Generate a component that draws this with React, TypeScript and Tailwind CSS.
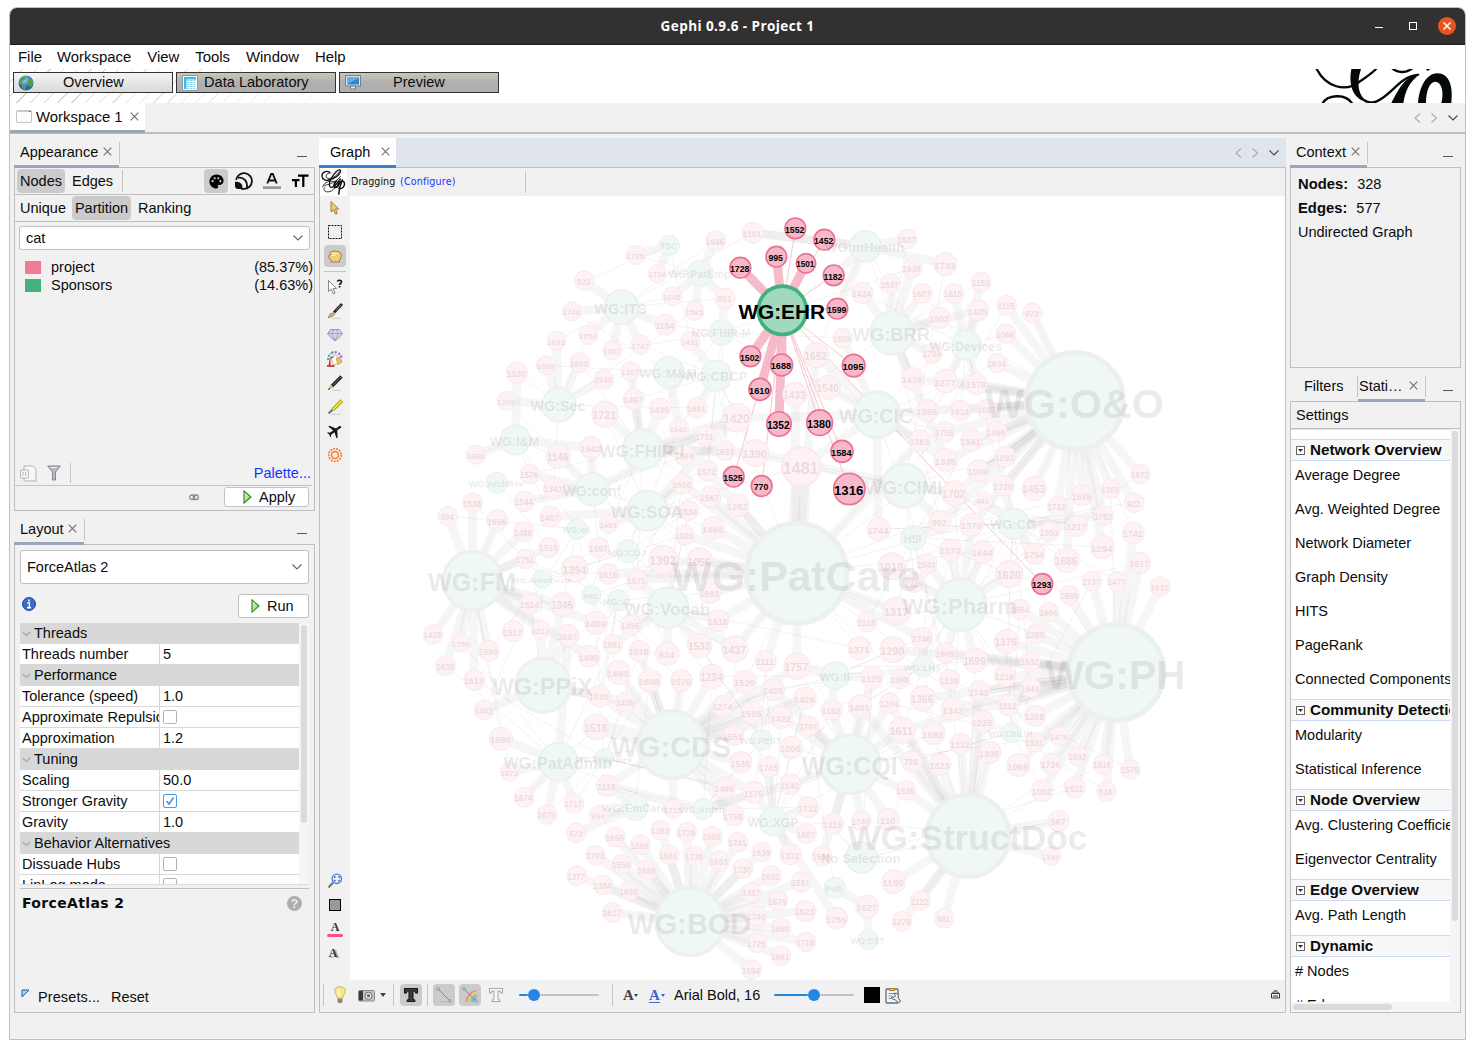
import React from "react";
import { MdFlight, MdPalette } from "react-icons/md";

/* ---------- graph data ---------- */

// Layout is stored in four quadrants; each entry is "label,x,y,radius".
const QUADRANTS: [number, number, string][] = [
  [0, 0, `TSC,748,106,32|1735,647,135,30|1734,713,191,29|1646,887,92,31|1181,998,68,33|WG:PatEmp,840,190,40|1645,757,259,30|1565,824,303,30|891,915,265,32|MG:FHIR-M,905,367,40|823,493,212,31|WG:ITS,604,292,54|1748,456,304,30|1753,505,375,30|1007,577,421,30|1747,662,404,30|1184,736,344,33|1431,811,393,30|1093,410,392,30|1689,378,466,30|1600,479,458,31|1549,552,508,31|1207,632,484,30|WG:M&M,746,487,48|WG:CBCP,889,497,48|1530,291,488,33|1209,260,572,30|WG:Sec,416,585,53|1721,555,613,41|1497,641,567,33|1436,720,596,33|1691,831,594,32|1642,777,654,30|1731,855,677,31|1420,951,623,45|1433,1125,553,38|1390,1006,729,42|1481,1144,770,61|WG:I&M,286,690,47|1668,168,734,30|1146,415,738,38|1542,513,713,35|WG:FHIR-I,668,718,63|1504,794,736,32|1653,916,722,31|1572,862,782,32|1650,788,822,32|WG:ArchRev,231,818,33|1576,329,792,31|1341,401,834,32|WG:conf,518,838,52|1544,313,874,32|1407,391,920,33|WG:SOA,683,902,63|1534,806,902,31|1567,871,861,33|1262,954,886,35|1494,879,955,36|1105,794,975,31|1491,566,942,30|WG:ed,471,957,32|1538,158,878,31|994,84,918,31|1656,232,931,33|1488,311,965,31|1515,387,1012,32|1751,317,1047,31|1597,537,1013,32|MG:CDJ,623,1024,36|1394,465,1077,41|1518,566,1092,32|1392,730,1049,45|1056,839,1052,40|1571,651,1109,32|WG:Anesthesia,367,1106,30|WG:FM,158,1112,93|WG:PatCare,1130,1090,158|IMC,514,1154,30|MG:V2,594,1171,33|1693,870,1148,34|1552,1126,55,33|995,1069,140,33|1728,961,173,33|1501,1158,160,31|WG:EHR,1087,301,77|1502,991,439,33|1688,1085,465,35|1610,1020,538,35|1352,1077,642,39|1525,941,800,33|770,1025,828,33`],
  [1140, 0, `1452,73,89,33|1182,101,196,33|1599,112,296,33|1095,161,467,36|1380,59,638,41|1584,126,724,35|1316,148,837,50|1293,727,1122,33|WG:mHealth,196,109,49|1507,322,87,31|1733,436,162,36|1636,337,174,31|1537,271,221,31|1424,187,249,33|1687,367,250,31|1615,461,250,31|1153,544,216,31|1425,534,301,33|1115,620,286,31|973,697,309,31|1503,419,324,33|WG:BRR,276,369,68|WG:Devices,499,406,46|1068,617,371,31|1509,128,384,31|1652,49,435,39|1704,397,430,31|1634,592,459,31|1426,338,507,35|1277,437,513,37|1578,530,522,33|1540,85,532,38|WG:O&O,825,573,153|WG:CIC,230,614,73|1585,382,602,35|1614,481,602,32|1087,562,598,31|1756,434,665,32|1496,589,665,32|1363,360,692,34|1541,514,691,34|1335,438,750,36|1292,616,741,33|1009,535,782,34|WG:CIMI,313,827,69|1702,463,850,39|1720,611,827,33|1453,703,835,38|460,550,872,29|1539,846,856,33|1700,932,836,31|1672,1022,792,31|922,1003,878,31|1712,772,889,31|1752,911,917,31|1217,831,948,33|1050,749,965,31|902,420,934,34|1370,515,944,36|WG:CG,641,941,48|1744,236,958,36|HSI,340,984,39|1742,1000,969,34|1294,907,1011,37|1573,452,1020,35|1644,548,1026,35|1754,704,1031,33|1686,800,1050,39|1010,275,1069,42|1543,381,1061,31|1239,344,1118,31|1620,628,1093,42|1737,876,1113,31|1477,952,1114,31|1617,1020,1058,33|1631,1081,1130,31|1655,809,1155,31|WG:Pharm,481,1185,82`],
  [0, 1140, `1428,39,133,31|1750,124,158,30|1550,207,182,32|1635,77,227,31|1613,163,270,33|1514,330,42,33|1345,428,44,38|1517,279,124,33|1212,363,120,30|1697,444,136,34|1489,528,98,36|1495,632,104,32|WG:Vocab,744,53,64|1618,895,92,34|1651,579,163,31|1490,508,199,34|1018,658,183,33|924,742,191,37|1533,839,167,38|1437,945,177,41|1111,1037,213,33|1757,1131,229,41|WG:PPiX,369,286,86|1402,193,360,31|1690,243,446,36|1493,595,247,37|1608,689,272,36|1570,784,272,34|1234,876,260,38|1520,975,275,36|1405,1061,299,34|1030,538,318,34|1435,617,335,31|1274,909,348,34|1505,996,368,36|1422,1084,382,35|1429,1155,325,35|1516,529,411,40|WG:CDS,755,464,107|1553,940,436,33|WG:PEST,1024,450,33|1005,1113,473,35|WG:PatAdmin,416,515,60|WG:Templates,553,505,30|1673,270,545,30|1674,312,622,31|1675,381,673,31|1717,462,640,31|1118,561,587,34|1535,963,517,34|1745,1047,530,33|1499,914,593,33|1175,1002,607,34|1142,1111,583,33|694,537,675,30|WG:EmCare,645,652,41|1715,760,656,30|WG:Arden,849,657,33|1758,941,676,33|WG:XGP,1061,694,45|573,469,729,31|1695,586,741,31|1589,661,764,31|1383,722,720,31|1729,800,726,31|1555,877,739,31|1741,954,757,31|1703,527,796,31|1556,605,823,31|1588,682,839,31|1681,747,794,31|1738,824,799,31|1683,898,812,31|1730,968,836,31|1639,1025,786,31|1372,1112,793,33|1682,1054,857,31|1377,470,857,31|1384,549,885,31|1626,628,902,31|1627,577,967,31|WG:BOD,810,995,107|1387,995,907,31|1679,1074,932,31|1740,1011,979,31|1680,1083,1014,31|1725,1011,1058,31|1661,1083,1097,31|1554,995,1139,31|1591,1144,876,32|1523,1156,963,33|1718,1158,1056,31|1732,1165,652,33|1607,1160,731,31|1707,1167,407,31`],
  [1140, 1140, `1128,201,96,31|1317,290,63,43|1654,660,58,32|1694,747,66,31|1260,707,133,31|1376,619,155,38|1746,366,144,33|1371,178,175,36|1290,279,179,41|1609,437,188,32|1699,525,211,38|1632,691,214,31|WG:PH,948,247,151|WG:II,106,257,43|WG:LHS,370,229,34|1125,216,262,35|1598,300,267,31|1139,449,269,32|1216,615,258,33|1743,538,304,33|1643,692,293,31|1366,368,325,39|1204,269,339,32|1401,180,349,36|1162,95,359,33|1342,460,357,36|1112,625,345,33|1208,705,377,33|1225,548,395,35|1611,306,421,41|1692,400,429,36|WG:ChiLIH,633,428,31|1521,705,456,31|1475,777,438,29|1232,482,461,33|1398,569,487,35|1069,655,525,36|1736,753,521,33|1532,834,499,31|1616,908,523,31|1575,991,538,31|728,335,513,33|1323,420,524,34|WG:CQI,151,523,93|1002,727,602,34|1511,824,592,33|816,919,604,31|1526,318,601,31|WG:StructDoc,504,737,130|567,776,693,33|1192,753,798,30|1315,99,702,33|1749,184,692,31|210,265,688,34|1536,66,798,31|No Selection,184,802,49|Pub,104,893,33|1180,281,875,37|1527,202,950,36|1122,361,932,31|1279,306,994,31|981,432,985,31|1755,110,985,34|WG:EST,205,1049,31`],
];

const LINKS: Record<string, string> = {
  TSC: "1735 1734",
  "WG:PatEmp": "1646 1645 1565 891",
  "MG:FHIR-M": "891",
  "WG:mHealth": "1181 1507 1733 1599 1182 1181",
  "WG:ITS": "823 1748 1753 1007 1747 1184",
  "WG:CBCP": "1431 1691",
  "WG:Sec": "1093 1689 1600 1549 1209",
  "WG:I&M": "1530 1668 1542",
  "WG:M&M": "1642",
  "WG:FHIR-I": "1721 1497 1207 1436 1420 1653 1731 1390",
  "WG:conf": "1146 1576 1341 1544 1542 1420",
  "WG:SOA": "1407 1650 1534 1420 1491",
  "WG:FM": "994 1538 1656 1488 1515 1751 1428 1750 1550 1635 1613 1514 1345 1489 1212 1490",
  "WG:PatCare": "1262 1494 1567 1650 1572 1105 1056 1392 1571 1518 1618 1757 1437 1317 1111 1746 1652 1433 1693 1363",
  "WG:BRR": "1424 1537 1636 1687 1503 1425 1704 1426 1335",
  "WG:Devices": "1153 1425 1615 1277 1578",
  "WG:O&O": "1068 1115 973 1634 1578 1426 1585 1614 1087 1496 1756 1541 1335 1292 1009 1720 1453 1712 1539 1752 1700 922 1672 1686 1294 1702 902 1277 1370",
  "WG:CIC": "1509 1540 1585 1363 1420 1744 1652 1481 1335",
  "WG:CIMI": "1390 902 1702",
  "WG:CG": "460 1217 1752 1754 1720",
  HSI: "902",
  "WG:Pharm": "1620 1573 1239 1370 1609 1699 1644 1543",
  "WG:PPiX": "1212 1697 1345 1402 1030 1435",
  "WG:PatAdmin": "1690 1673 1674 1675 1717 1697",
  "WG:CDS": "1435 1030 1493 1608 1018 1570 1234 1520 1405 1274 1505 1422 1429 1553 1535 1499 1175 1758 1715 1757 1118",
  "WG:EmCare": "573 694 1118",
  "WG:Arden": "1118 1175 1142",
  "WG:XGP": "1745 1175 1732 1607 1372 1755",
  "WG:BOD": "1695 1589 1383 1729 1555 1741 1703 1556 1588 1681 1738 1683 1730 1639 1682 1377 1384 1626 1627 1387 1679 1740 1680 1725 1661 1554 1591 1523 1718",
  "WG:CQI": "1401 1162 1125 1204 1611 1315 1749 210 1142 1707 1526 1536 1422 1405",
  "WG:StructDoc": "1526 1323 728 1232 1225 1398 1611 1180 1122 1279 981 567 1192 1204 1743 1401",
  "WG:PH": "1655 1694 1260 1654 1632 1216 1743 1643 1366 1342 1112 1208 1521 1069 1475 1736 1002 1532 1511 1616 816 1575 1631 1617 1477 1737 1742 1376 1699 1611 1609 1290",
  Pub: "1527",
  "WG:EST": "1527",
  "WG:II": "1757 1162 1125",
  "WG:LHS": "1746",
  "WG:Vocab": "1495 1651 1618 1437 1533 1571 924",
};

const STRONG = ["1728", "995", "1501", "1502", "1610", "1688", "1352"];
const WEAK = ["1552", "1452", "1182", "1599", "1095", "1380", "1584", "1316", "1525", "770", "1293"];
const ACTIVE = new Set(["WG:EHR", ...STRONG, ...WEAK]);

type GNode = { id: string; x: number; y: number; r: number; hub: boolean };

const NODES: GNode[] = QUADRANTS.flatMap(([ox, oy, s]) =>
  s.split("|").map((e) => {
    const [id, x, y, r] = e.split(",");
    return { id, x: ox + +x, y: oy + +y, r: +r, hub: !/^\d+$/.test(id) };
  }),
);
const BY_ID = new Map(NODES.map((n) => [n.id, n]));
const HUBS = NODES.filter((n) => n.hub && n.id !== "WG:EHR");

// Weak ties between projects and the surrounding work groups.
const WEB = NODES.filter((n) => !n.hub && !ACTIVE.has(n.id) && n.y < 1850).flatMap((n) => {
  const near = HUBS.map((h) => ({ h, d: Math.hypot(h.x - n.x, h.y - n.y) }))
    .filter((e) => e.d < 720 && e.d > 120)
    .sort((a, b) => a.d - b.d);
  const seed = +n.id;
  const inner = Math.hypot(n.x - 1130, n.y - 1130) < 650;
  return (inner ? [seed % 5, (seed % 7) + 3] : [seed % 6])
    .filter((i) => near[i])
    .map((i) => [n, near[i].h] as const);
});

function Line({ a, b, w, c }: { a: GNode; b: GNode; w: number; c: string }) {
  return <line x1={a.x} y1={a.y} x2={b.x} y2={b.y} strokeWidth={w} stroke={c} />;
}

const EDGE = "rgba(100,85,70,0.05)";

function Graph() {
  const ehr = BY_ID.get("WG:EHR")!;
  const faded = NODES.filter((n) => !ACTIVE.has(n.id));
  const active = NODES.filter((n) => ACTIVE.has(n.id));
  const label = (n: GNode, fill: string) => (
    <text key={n.id} x={n.x - 2} y={n.y + n.r * 0.32 + 2} fontSize={n.hub ? n.r * 0.81 : n.r * 0.79} textAnchor="middle" fill={fill}>
      {n.id}
    </text>
  );
  return (
    <svg viewBox="-210 -42 2805 2352" className="block h-full w-full font-['Liberation_Sans',Arial,sans-serif] font-bold">
      {Object.entries(LINKS).flatMap(([h, s]) =>
        s.split(" ").map((id, i) => <Line key={h + id + i} a={BY_ID.get(h)!} b={BY_ID.get(id)!} w={26} c={EDGE} />),
      )}
      <Line a={BY_ID.get("1481")!} b={BY_ID.get("WG:PatCare")!} w={60} c={EDGE} />
      <Line a={BY_ID.get("1516")!} b={BY_ID.get("WG:CDS")!} w={46} c={EDGE} />
      {WEB.map(([a, b], i) => (
        <Line key={i} a={a} b={b} w={2} c="rgba(100,85,70,0.11)" />
      ))}
      {STRONG.map((id) => (
        <Line key={id} a={ehr} b={BY_ID.get(id)!} w={27} c="#f6bccb" />
      ))}
      {WEAK.map((id) => (
        <Line key={id} a={ehr} b={BY_ID.get(id)!} w={2.2} c="#f6b0c1" />
      ))}
      {faded.map((n) => (
        <circle
          key={n.id}
          cx={n.x}
          cy={n.y}
          r={n.r * 0.95}
          fill={n.hub ? "#eff8f5" : "#fef2f4"}
          stroke={n.hub ? "#ecf1ef" : "#f9eaed"}
          strokeWidth={n.r * 0.1}
        />
      ))}
      {active.map((n) => (
        <circle
          key={n.id}
          cx={n.x}
          cy={n.y}
          r={n.r * 0.94}
          fill={n.hub ? "#a0d9be" : "#f6b9c9"}
          stroke={n.hub ? "#41b27d" : "#ed7290"}
          strokeWidth={n.hub ? 11 : 5}
        />
      ))}
      {faded.map((n) => label(n, n.hub ? "rgba(50,50,50,0.115)" : "rgba(100,60,70,0.14)"))}
      {active.map((n) => label(n, "#000"))}
    </svg>
  );
}

/* ---------- small pieces ---------- */

function Cross({ c = "#6e6e6e" }: { c?: string }) {
  return (
    <svg width="9" height="9" viewBox="0 0 9 9" className="shrink-0">
      <path d="M.7.7 8.3 8.3M8.3.7.7 8.3" stroke={c} strokeWidth="1.1" />
    </svg>
  );
}
function Chevron({ dir, c = "#666" }: { dir: "l" | "r" | "d"; c?: string }) {
  const d = dir === "l" ? "M7 0.5 2 5 7 9.5" : dir === "r" ? "M2.5.5 7.5 5 2.5 9.5" : "M.5 2.5 5 7 9.5 2.5";
  return (
    <svg width="10" height="10" viewBox="0 0 10 10" className="shrink-0" fill="none">
      <path d={d} stroke={c} strokeWidth="1.1" />
    </svg>
  );
}
const VSep = ({ className = "" }: { className?: string }) => <div className={`w-px shrink-0 bg-[#c4c4c4] ${className}`} />;

function TabArrows() {
  return (
    <div className="mt-[10px] mr-[7px] ml-auto flex">
      <Chevron dir="l" c="#aaa" />
      <div className="w-[6px]" />
      <Chevron dir="r" c="#aaa" />
      <div className="w-[9px]" />
      <Chevron dir="d" c="#444" />
    </div>
  );
}

function ViewHeader({ title, width }: { title: string; width: string }) {
  return (
    <div className="flex h-[29px] shrink-0 items-start">
      <div className={`z-10 flex h-[30px] items-center justify-between border-b-3 border-[#9aa7b8] pr-[7px] pl-[6px] ${width}`}>
        <span>{title}</span>
        <Cross />
      </div>
      <VSep className="mt-1 h-[21px]" />
      <Minimize />
    </div>
  );
}
const Minimize = () => <div className="mt-[18px] mr-[8px] ml-auto h-px w-[10px] bg-[#555]" />;

function Play() {
  return (
    <svg width="9" height="14" viewBox="0 0 9 14">
      <defs>
        <linearGradient id="play" x2="1" y2="1">
          <stop stopColor="#e4f7d4" />
          <stop offset="1" stopColor="#8dcc5e" />
        </linearGradient>
      </defs>
      <path d="M1 .9 8 7 1 13.1z" fill="url(#play)" stroke="#2b8414" strokeWidth="1.1" />
    </svg>
  );
}

function GephiMark() {
  return (
    <svg width="27" height="28" viewBox="0 0 81 84" fill="none" stroke="#111">
      <path d="M30 13C16 6 5 14 6 25c1 9 10 14 20 11 17-4 31-14 35-25 2-7-5-7-11-1-14 13-25 34-21 45 4 9 19-2 33-24" strokeWidth="4" />
      <path d="M34 15c-11-2-20 8-14 14 10 7 30-4 38-18M8 58c2-12 16-20 30-18 9 1 12 8 8 16-5 11-18 18-28 15-7-2-8-10-2-14" strokeWidth="2.6" />
      <path d="M12 52c14-1 38-10 50-28" strokeWidth="2.4" />
      <path d="M52 38c-8 3-13 15-8 20 6 3 14-8 18-20" strokeWidth="5" />
      <path d="M52 58c1-10 6-18 14-19 8 0 9 9 6 15-3 7-12 10-17 6M68 34C61 48 57 64 56 80" strokeWidth="4.500" />
    </svg>
  );
}

function GephiBanner() {
  return (
    <svg width="147" height="34" viewBox="390 207 441 102" className="mr-[8px]">
      <g fill="none" stroke="#050808" strokeWidth="7">
        <path d="M408 203c30 62 90 72 128 44 20-14 42-28 54-42M427 313c12-30 70-34 90-2M552 300c10 8 26 10 38 4 50-22 66-74 126-80" />
        <path d="M635 203c16 17 42 17 62 2" />
      </g>
      <path d="M514 207h29c-15 45-8 84 22 99-38-3-62-40-51-99zM720 222c-45 6-62 42-86 87h36c6-34 16-62 50-87zM714 309c6-64 34-88 56-89 38-1 50 38 44 89h-30c10-37-2-64-18-64-18 0-28 30-28 64zM738 207h14l-10 6z" fill="#050808" />
    </svg>
  );
}

/* ---------- top area ---------- */

function TitleBar() {
  return (
    <div className="flex h-[37px] shrink-0 items-center border-b border-[#1f1e1e] bg-[#323031] text-white">
      <div className="w-[100px]" />
      <div className="flex-1 text-center font-['Open_Sans','Noto_Sans',sans-serif] text-[13.5px] font-bold tracking-[0.42px]">
        Gephi 0.9.6 - Project 1
      </div>
      <div className="flex w-[100px] items-center pl-[10px]">
        <div className="mt-[3px] h-px w-2 bg-white" />
        <div className="ml-[26px] size-2 border border-white" />
        <div className="ml-[21px] flex size-[18px] items-center justify-center rounded-full bg-[#e95420]">
          <svg width="8" height="8" viewBox="0 0 8 8">
            <path d="M.5.5l7 7M7.5.5l-7 7" stroke="#fff" strokeWidth="1.5" />
          </svg>
        </div>
      </div>
    </div>
  );
}

function Perspective({ name, icon, on, pad }: { name: string; icon: React.ReactNode; on?: boolean; pad: string }) {
  return (
    <div
      className={`flex h-[21px] w-[160px] items-center border border-[#333] text-[14.6px] ${pad} ${
        on ? "bg-linear-to-b from-[#f4f4f4] to-[#d9d9d9]" : "bg-linear-to-b from-[#c6c8b8] via-[#b0b0b0] to-[#aeaeae]"
      }`}
    >
      {icon}
      <span className="-mt-px">{name}</span>
    </div>
  );
}

const Globe = (
  <svg width="16" height="16" viewBox="0 0 16 16">
    <defs>
      <radialGradient id="globe" cx=".4" cy=".3">
        <stop stopColor="#9fd4f5" />
        <stop offset="1" stopColor="#2766ac" />
      </radialGradient>
    </defs>
    <circle cx="8" cy="8" r="7.5" fill="url(#globe)" />
    <path d="M2 4c2-3 5-3 6-2l-1 3-3 1-1 3-2-1zM10 5l4-1c2 3 1 6-1 8l-3-2zM4 10l4 1-1 4-3-2z" fill="#4fa048" />
  </svg>
);
const Sheet = (
  <svg width="16" height="16" viewBox="0 0 16 16">
    <rect x=".5" y=".5" width="15" height="15" fill="#fff" stroke="#8c9aa4" />
    <path d="M2 2h12v2.500H2zM2 2h2.500v12H2z" fill="#3fb9e8" />
    <path d="M5 5.500h9M5 7.500h9M5 9.500h9M5 11.500h9M5 13.500h9" stroke="#7fd6f4" strokeDasharray="2.200 1" />
  </svg>
);
const Monitor = (
  <svg width="16" height="15" viewBox="0 0 16 15">
    <rect x=".5" y=".5" width="15" height="10.500" fill="#dde3ea" stroke="#75808b" />
    <path d="M2 2h12v7.500H2z" fill="#3285cf" />
    <path d="M2 9 14 3v-1H2z" fill="#68aee6" />
    <path d="M5.500 11h5v3h-5z" fill="#e5e5e5" stroke="#777" />
  </svg>
);

function TopBars() {
  return (
    <>
      <div className="flex h-[24px] shrink-0 items-center bg-white text-[14.9px]">
        {[
          ["File", "ml-[8px]"],
          ["Workspace", "ml-[15px]"],
          ["View", "ml-[16px]"],
          ["Tools", "ml-[16px]"],
          ["Window", "ml-[16px]"],
          ["Help", "ml-[16px]"],
        ].map(([t, m]) => (
          <span key={t} className={m}>{t}</span>
        ))}
      </div>
      <div className="flex h-[34px] shrink-0 bg-white">
        <div className="flex flex-1 gap-[3px] bg-[linear-gradient(90deg,transparent,white_330px),repeating-linear-gradient(135deg,#fff_0_8.7px,#cdcdcd_8.7px_9.7px)] pt-[3px] pl-[3px]">
          <Perspective name="Overview" icon={Globe} on pad="gap-[29px] pl-[4px]" />
          <Perspective name="Data Laboratory" icon={Sheet} pad="gap-[6px] pl-[5px]" />
          <Perspective name="Preview" icon={Monitor} pad="gap-[32px] pl-[5px]" />
        </div>
        <GephiBanner />
      </div>
      <div className="flex h-[31px] shrink-0 items-start border-b-2 border-[#bfbfbf]">
        <div className="flex h-[30px] w-[135px] items-center border-b-3 border-[#9aa7b8] bg-white pr-[6px] pl-[6px]">
          <svg width="16" height="14" viewBox="0 0 16 14" className="mr-[4px]">
            <rect x=".5" y=".5" width="15" height="12" rx="1" fill="#fbfbfb" stroke="#c3c3c3" />
            <path d="M1 1.500h14" stroke="#ccc" />
            <path d="M13 1.500h2" stroke="#e04a3c" />
          </svg>
          <span className="flex-1 text-[14.9px]">Workspace 1</span>
          <Cross />
        </div>
        <TabArrows />
      </div>
    </>
  );
}

/* ---------- left column ---------- */

function Appearance() {
  return (
    <>
      <ViewHeader title="Appearance" width="w-[105px]" />
      <section className="flex h-[344px] shrink-0 flex-col border border-[#bfbfbf]">
        <div className="flex h-[27px] items-center border-b border-[#bfbfbf] pl-[2px]">
          <span className="flex h-6 w-12 items-center justify-center rounded bg-[#cbcbcb]">Nodes</span>
          <span className="ml-[7px] w-[50px]">Edges</span>
          <VSep className="h-[22px]" />
          <div className="ml-[81px] flex size-6 items-center justify-center rounded bg-[#cbcbcb]">
            <MdPalette size={17} color="#000" />
          </div>
          <svg width="18" height="18" viewBox="0 0 18 18" className="ml-[7px]" fill="none" stroke="#111">
            <path d="M1.200 8A7.900 7.900 0 1 1 9 16.900H6" strokeWidth="1.800" />
            <path d="M3 5.800C9 4.800 13 9.500 11.800 16.500" strokeWidth="1.800" />
            <path d="M0 9.800c5-.8 8 2.400 7.500 7.200H3.500C1 17 0 16 0 13.500z" fill="#111" stroke="none" />
          </svg>
          <svg width="18" height="18" viewBox="0 0 18 18" className="ml-[10px]">
            <path d="M4.300 11.500 8.200 2h1.600l3.900 9.500M5.800 8.500h6.400" stroke="#111" strokeWidth="1.900" fill="none" />
            <path d="M0 14.300h18v2.600H0z" fill="#999" />
          </svg>
          <svg width="17" height="14" viewBox="0 0 17 14" className="ml-[11px]">
            <path d="M6 1.700h10.500M11.300 1.200V13M0 6.200h7.500M3.900 5.700V13" stroke="#000" strokeWidth="2.200" />
          </svg>
        </div>
        <div className="flex h-[27px] items-center border-b border-[#bfbfbf] pl-[5px]">
          <span className="w-[52px]">Unique</span>
          <span className="flex h-6 w-[59px] items-center justify-center rounded bg-[#cbcbcb]">Partition</span>
          <span className="ml-[7px]">Ranking</span>
        </div>
        <div className="mt-[4px] ml-[4px] flex h-6 w-[291px] shrink-0 items-center justify-between rounded-[3px] border border-[#bfbfbf] bg-white pr-[6px] pl-[6px]">
          <span>cat</span>
          <Chevron dir="d" />
        </div>
        <div className="mt-[8px] leading-[18px]">
          {[
            ["project", "(85.37%)", "bg-[#f07b95]"],
            ["Sponsors", "(14.63%)", "bg-[#41b37d]"],
          ].map(([n, p, c]) => (
            <div key={n} className="flex h-[18px] items-center pr-[1px] pl-[10px]">
              <div className={`mr-[10px] h-[13px] w-4 ${c}`} />
              <span className="flex-1">{n}</span>
              <span>{p}</span>
            </div>
          ))}
        </div>
        <div className="mt-auto mr-[2px] flex h-[25px] shrink-0 items-center border-b border-[#c4c4c4] pl-[5px]">
          <svg width="17" height="17" viewBox="0 0 17 17" fill="#f6f6f6" stroke="#b4b4b4">
            <path d="M4 1h9l3 3v12H4z" />
            <rect x=".5" y="5" width="8" height="8" rx="1" />
            <path d="M3 7v4M5.500 7v4" />
          </svg>
          <svg width="14" height="16" viewBox="0 0 14 16" className="ml-[10px]">
            <path d="M.7 1h12.600L8.500 7v8H5.500V7z" fill="#b9b9c6" stroke="#858585" />
            <path d="M3 2.500h7" stroke="#eee" />
          </svg>
          <VSep className="ml-[9px] h-5" />
          <span className="mr-px ml-auto text-[#1433ff]">Palette...</span>
        </div>
        <div className="flex h-[24px] shrink-0 items-start">
          <svg width="10" height="7" viewBox="0 0 10 7" className="mt-[8px] ml-[174px]" fill="none" stroke="#888" strokeWidth="1.300">
            <rect x=".7" y="1" width="5" height="4.500" rx="2" />
            <rect x="4.300" y="1" width="5" height="4.500" rx="2" />
          </svg>
          <button className="mt-px ml-[25px] flex h-5 w-[85px] items-center gap-[7px] rounded-[3px] border border-[#c4c4c4] bg-white pl-[18px]">
            <Play />
            Apply
          </button>
        </div>
      </section>
    </>
  );
}

const ROWS: [string, string?][] = [
  ["Threads"],
  ["Threads number", "5"],
  ["Performance"],
  ["Tolerance (speed)", "1.0"],
  ["Approximate Repulsion", "off"],
  ["Approximation", "1.2"],
  ["Tuning"],
  ["Scaling", "50.0"],
  ["Stronger Gravity", "on"],
  ["Gravity", "1.0"],
  ["Behavior Alternatives"],
  ["Dissuade Hubs", "off"],
  ["LinLog mode", "off"],
];

function CheckBox({ on }: { on: boolean }) {
  return (
    <svg width="14" height="14" viewBox="0 0 14 14">
      <rect x=".5" y=".5" width="13" height="13" rx="1.500" fill="#fff" stroke={on ? "#4a9be8" : "#b3b3b3"} />
      {on && <path d="M3.500 7 6 10l4.500-6.500" fill="none" stroke="#4a9be8" strokeWidth="1.700" />}
    </svg>
  );
}

function LayoutView() {
  return (
    <>
      <ViewHeader title="Layout" width="w-[70px]" />
      <section className="flex h-[469px] flex-col border border-[#bfbfbf] px-[5px]">
        <div className="mt-[5px] flex h-[34px] w-[289px] shrink-0 items-center justify-between rounded-[3px] border border-[#bfbfbf] bg-white px-[6px]">
          <span>ForceAtlas 2</span>
          <Chevron dir="d" />
        </div>
        <div className="mt-[10px] flex h-6 shrink-0 items-start justify-between pr-0 pl-[2px]">
          <svg width="14" height="14" viewBox="0 0 14 14" className="mt-[3px]">
            <circle cx="7" cy="7" r="6.500" fill="#3d6cc8" stroke="#1f469a" />
            <path d="M7 2.500v2M5.300 6h2v4.300M5 10.800h4" stroke="#fff" strokeWidth="1.500" />
          </svg>
          <button className="flex h-6 w-[71px] items-center gap-[7px] rounded-[3px] border border-[#bfbfbf] bg-white pl-[12px]">
            <Play />
            Run
          </button>
        </div>
        <div className="mt-[5px] flex h-[262px] shrink-0 overflow-hidden border-b border-[#dcdcdc]">
          <div className="w-[279px]">
            {ROWS.map(([n, v]) =>
              v === undefined ? (
                <div key={n} className="flex h-[21px] items-center bg-[#d8d8d8] pb-px pl-[2px]">
                  <svg width="9" height="6" viewBox="0 0 9 6" className="mt-[2px] mr-[3px]" fill="none">
                    <path d="M.8.8 4.500 4.500 8.200.8" stroke="#b2b2b2" strokeWidth="1.700" />
                  </svg>
                  {n}
                </div>
              ) : (
                <div key={n} className="flex h-[21px] border-b border-[#d8d8d8] bg-white">
                  <div className="w-[140px] overflow-hidden border-r border-[#d8d8d8] pl-[2px] leading-[20px] whitespace-nowrap">{n}</div>
                  <div className="flex items-center pl-[3px]">
                    {v === "on" || v === "off" ? <CheckBox on={v === "on"} /> : v}
                  </div>
                </div>
              ),
            )}
          </div>
          <div className="flex-1 bg-[#f5f5f5] pt-[2px] pl-[2px]">
            <div className="h-[198px] w-[6px] rounded-full bg-[#dbdbdb]" />
          </div>
        </div>
        <div className="mt-[3px] flex shrink-0 items-center justify-between border-t border-[#bfbfbf] pt-[5px] pr-[7px] pl-[2px]">
          <span className="font-['DejaVu_Sans',sans-serif] text-[14px] leading-[19px] font-bold tracking-[0.35px]">ForceAtlas 2</span>
          <span className="flex size-[15px] items-center justify-center rounded-full bg-[#adadad] text-[12px] font-bold text-[#eee]">?</span>
        </div>
        <div className="mt-auto mb-[5px] flex items-center">
          <svg width="9" height="9" viewBox="0 0 9 9" className="mb-[7px] ml-px">
            <path d="M1 1h7L1 8z" fill="#a5d4f5" stroke="#1e62a0" />
          </svg>
          <span className="ml-[8px] w-[73px] tracking-[0.1px]">Presets...</span>
          <span>Reset</span>
        </div>
      </section>
    </>
  );
}

/* ---------- graph view ---------- */

const Tool = ({ children, on }: { children: React.ReactNode; on?: boolean }) => (
  <div className="flex h-6 w-[30px] items-center justify-center">
    <div className={`flex size-[22px] items-center justify-center rounded ${on ? "bg-[#cbcbcb]" : ""}`}>{children}</div>
  </div>
);

function Ico({ children, s = 16 }: { children: React.ReactNode; s?: number }) {
  return (
    <svg width={s} height={s} viewBox="0 0 16 16" fill="none">
      {children}
    </svg>
  );
}

function ToolColumn() {
  return (
    <div className="flex w-[30px] shrink-0 flex-col">
      <Tool>
        <Ico>
          <path d="M4 1.500v10.500l2.600-2.200 1.900 4.400 1.800-.8L8.500 9h3.300z" fill="#eecb78" stroke="#9a7432" strokeWidth=".9" />
        </Ico>
      </Tool>
      <Tool>
        <Ico><rect x="1.500" y="1.500" width="13" height="13" stroke="#111" strokeDasharray="2 1" /></Ico>
      </Tool>
      <Tool on>
        <Ico>
          <path
            d="M4.500 14 4 12 1.700 9.500 2 7.500 3.300 7V4.500L4.500 3.300l1.700.4L7 2.800h1.700l.8.900 1-.6 1.500.6.4 1.100 1.200.1.900 1.100-.3 3.500L12.500 12v2z"
            fill="#f0cd7a"
            stroke="#9c7431"
            strokeWidth=".9"
            strokeLinejoin="round"
          />
          <path d="M5 5.500h6.500M4.500 7.500h4" stroke="#fff0c2" />
        </Ico>
      </Tool>
      <div className="mx-[4px] mt-[3px] mb-[3px] h-px bg-[#c4c4c4]" />
      <Tool>
        <Ico>
          <path d="M1.500 1.500v11l2.800-2.400 2 4.700 1.800-.8-2-4.500h3.500z" fill="#fff" stroke="#888" />
          <path d="M10.500 2.700c.2-2 4-2 4 .3 0 1.500-2 1.500-2 3M12.500 7v1.500" stroke="#111" strokeWidth="1.600" />
        </Ico>
      </Tool>
      <Tool>
        <Ico>
          <path d="M15 1 7 9.500" stroke="#222" strokeWidth="2.700" />
          <path d="M7.500 9 6 11M14 2 9 7.500" stroke="#aaa" strokeWidth=".8" />
          <path d="M6.500 9.500 3 11l-2 4 4.500-1.500L8 11z" fill="#c7b183" stroke="#897748" strokeWidth=".6" />
          <path d="M5 15.300h9" stroke="#ccc" />
        </Ico>
      </Tool>
      <Tool>
        <Ico>
          <path d="M3.500 2.500h9L15.500 7 8 14 .5 7z" fill="#d5d4eb" stroke="#827ea6" strokeWidth=".8" />
          <path d="M.5 6.500h15M5 6.500 8 14l3-7.500L9.500 3M5 6.500 6.500 3" stroke="#9692bd" strokeWidth=".7" />
        </Ico>
      </Tool>
      <Tool>
        <Ico>
          <g strokeWidth="2.200" strokeDasharray="2 1.300">
            <path d="M1.300 9A6.700 6.700 0 0 1 4 2.500" stroke="#35b27a" />
            <path d="M4.500 2A6.700 6.700 0 0 1 11 2" stroke="#5a86e8" />
            <path d="M11.500 2.300A6.700 6.700 0 0 1 14.700 8" stroke="#b05ad6" />
          </g>
          <path d="M4 6.500 9 3.500l4.500 8-7 2.500z" fill="#fff" stroke="#b98" strokeWidth=".7" />
          <path d="M3 6.500 7 5.200 6 7l-2.500.5V14L1.500 14.500z" fill="#c92222" />
          <path d="M9 7.500l3.500-1.500 2.500 5-4 2.500z" fill="#f0bd55" stroke="#b8842f" strokeWidth=".6" />
          <path d="M0 15h7.500" stroke="#c92222" strokeWidth="1.600" />
        </Ico>
      </Tool>
      <Tool>
        <Ico>
          <path d="M14.500 1.500 5 11" stroke="#2a2a2a" strokeWidth="3.400" />
          <path d="M14 2 6 10" stroke="#777" strokeWidth=".7" />
          <path d="M3.500 9.500 1 15l5.500-2.500z" fill="#d1ba83" />
          <path d="M1 15l1-2 1.200 1z" fill="#111" />
          <path d="M5 15.300h9" stroke="#ccc" />
        </Ico>
      </Tool>
      <Tool>
        <Ico>
          <path d="M15 1.500 6 10.500" stroke="#88850b" strokeWidth="3.400" />
          <path d="M15 1.500 6 10.500" stroke="#efec2c" strokeWidth="2" />
          <path d="M5.700 10.500 1.500 14.500" stroke="#777" strokeWidth="2.200" />
          <path d="M4 15.300h10" stroke="#ccc" />
        </Ico>
      </Tool>
      <Tool>
        <MdFlight size={18} color="#1b1812" className="rotate-[55deg]" />
      </Tool>
      <Tool>
        <Ico>
          <circle cx="8" cy="8" r="6.300" stroke="#f47a28" strokeWidth="1.700" strokeDasharray="1.900 1.100" />
          <circle cx="8" cy="8" r="3.500" stroke="#f47a28" strokeWidth="1.500" />
        </Ico>
      </Tool>
      <div className="mt-auto mb-[15px]">
        <Tool>
          <Ico>
            <path d="M1.500 14.500 6 9.500" stroke="#777" strokeWidth="2.200" />
            <circle cx="9.800" cy="5.800" r="4.700" fill="#eaf1ff" stroke="#5973d0" strokeWidth="1.300" />
            <path d="M7.500 5V3.700h1.400M11 3.700h1.300V5M12.300 6.800V8H11M8.900 8H7.500V6.800" stroke="#2b49c5" />
          </Ico>
        </Tool>
        <Tool>
          <div className="size-3 border border-black bg-[#999]" />
        </Tool>
        <Tool>
          <div className="flex w-4 flex-col items-center font-['Liberation_Serif',serif] text-[12px] leading-[11px] font-bold text-[#333]">
            A
            <div className="mt-px h-[3px] w-4 rounded-full bg-[#ff4e82]" />
          </div>
        </Tool>
        <Tool>
          <span className="mr-[4px] font-['Liberation_Serif',serif] text-[12px] font-bold text-[#333] [text-shadow:2px_1px_1px_#aaa]">A</span>
        </Tool>
      </div>
    </div>
  );
}

const Slider = ({ knob }: { knob: string }) => (
  <div className="flex h-3 w-[80px] shrink-0 items-center">
    <div className={`h-[2px] rounded bg-[#2486e4] ${knob}`} />
    <div className="size-3 shrink-0 rounded-full bg-[#2486e4]" />
    <div className="h-[2px] flex-1 rounded bg-[#c4c4c4]" />
  </div>
);

// Slab letter used by the "show labels" toggles.
function SlabT({ fill, stroke }: { fill: string; stroke: string }) {
  return (
    <svg width="16" height="16" viewBox="0 0 16 16">
      <path
        d="M1.500 1.500h13v4.500h-1.800l-.7-2H10v8.500l1.800.6v1.400H4.200v-1.400l1.800-.6V4H4l-.7 2H1.500z"
        fill={fill}
        stroke={stroke}
        strokeWidth="1.100"
      />
    </svg>
  );
}

function GraphFooter() {
  return (
    <div className="flex h-[32px] shrink-0 items-center pb-[2px] pl-[3px]">
      <VSep className="h-[22px]" />
      <svg width="12" height="18" viewBox="0 0 12 18" className="ml-[10px]">
        <path d="M6 .8c7 0 6 6.500 2.800 9.500v2H3.300v-2C0 7.300-1 .8 6 .8z" fill="#f9e98d" stroke="#c4a947" strokeWidth=".8" />
        <path d="M3.500 12.700h5v3.500L6 17.300l-2.500-1.100z" fill="#858585" />
        <path d="M4.500 4 5 10" stroke="#fffbd5" strokeWidth="1.500" />
      </svg>
      <svg width="17" height="13" viewBox="0 0 17 13" className="ml-[12px]">
        <rect x=".5" y="1.500" width="16" height="10.500" rx="1" fill="#c5c5c5" stroke="#8a8a8a" />
        <path d="M1 2h4v9.500H1z" fill="#3a3a3a" />
        <circle cx="10.500" cy="6.800" r="3.600" fill="#eee" stroke="#666" />
        <circle cx="10.500" cy="6.800" r="1.700" fill="#546a8f" />
      </svg>
      <svg width="6" height="4" viewBox="0 0 6 4" className="ml-[5px]"><path d="M0 0h6L3 4z" fill="#3c4650" /></svg>
      <VSep className="ml-[7px] h-[22px]" />
      <div className="ml-[6px] flex size-[22px] items-center justify-center rounded bg-[#cbcbcb]">
        <SlabT fill="#3c3c3c" stroke="#161616" />
      </div>
      <VSep className="ml-[5px] h-[22px]" />
      <div className="ml-[5px] flex size-[22px] items-center justify-center rounded bg-[#cbcbcb]">
        <Ico>
          <path d="M2 2 14 14" stroke="#7195b8" />
          <circle cx="2" cy="2" r="1.300" fill="#e9f3ff" stroke="#7195b8" />
          <circle cx="14" cy="14" r="1.300" fill="#e9f3ff" stroke="#7195b8" />
          <path d="M4 14.800h7" stroke="#b5b5b5" />
        </Ico>
      </div>
      <div className="ml-[4px] flex size-[22px] items-center justify-center rounded bg-[#cbcbcb]">
        <Ico>
          <path d="M4.500 15C5 9 9 5 14.500 3.500" stroke="#ee8179" strokeWidth="1.800" />
          <path d="M6.500 15c.5-5 4-8.500 8-9.800" stroke="#f0cf74" strokeWidth="1.800" />
          <path d="M8.500 15c.4-4 3-6.500 6-7.700" stroke="#8fcb8e" strokeWidth="1.800" />
          <path d="M10.500 15c.3-3 2-4.500 4-5.500" stroke="#8aa4e0" strokeWidth="1.800" />
          <path d="M2 2 14 14" stroke="#7195b8" />
          <circle cx="2" cy="2" r="1.300" fill="#e9f3ff" stroke="#7195b8" />
          <circle cx="14" cy="14" r="1.300" fill="#e9f3ff" stroke="#7195b8" />
        </Ico>
      </div>
      <div className="ml-[4px] flex size-[22px] items-center justify-center">
        <SlabT fill="#fbfbfb" stroke="#a9a9a9" />
      </div>
      <div className="w-[12px]" />
      <Slider knob="w-[9px]" />
      <VSep className="ml-[13px] h-[22px]" />
      <div className="ml-[10px] flex items-center font-['Liberation_Serif',serif] text-[15px] font-bold">
        <span className="w-[11px] text-[#444]">A</span>
        <svg width="4" height="3" viewBox="0 0 4 3"><path d="M0 0h4L2 3z" fill="#345" /></svg>
        <span className="ml-[11px] w-[11px] border-b border-[#3f63cf] leading-[14px] text-[#3f63cf]">A</span>
        <svg width="4" height="3" viewBox="0 0 4 3" className="ml-[1px]"><path d="M0 0h4L2 3z" fill="#3f63cf" /></svg>
      </div>
      <span className="ml-[9px] w-[100px]">Arial Bold, 16</span>
      <Slider knob="w-[34px]" />
      <div className="ml-[10px] size-4 bg-black" />
      <svg width="16" height="17" viewBox="0 0 16 17" className="ml-[5px]" fill="none">
        <rect x="1" y="2" width="12" height="14" rx="1" fill="#eff3f6" stroke="#5f7079" strokeWidth="1.300" />
        <path d="M4.500 3.500V1.500h5v2z" fill="#f1cf79" stroke="#a67b24" />
        <path d="M3.500 6.500h7M3.500 9h3M3.500 11.500h3" stroke="#8496a2" />
        <path d="M9 6.500c3-1 5 1 4 4l2.500 3.500-1.700 2-4-3.500c-2 .5-3.500-1-3-3l2.200 1 1.500-1.500z" fill="#f2f2f2" stroke="#4d5d68" />
      </svg>
      <svg width="9" height="10" viewBox="0 0 9 10" className="mr-[5px] mb-[2px] ml-auto" fill="none" stroke="#333">
        <path d="M1 4.500 4.500 1 8 4.500z" fill="#aaa" />
        <path d="M.5 4.500h8v4.500h-8zM2 7h5" />
      </svg>
    </div>
  );
}

function GraphView() {
  return (
    <main className="flex w-[967px] shrink-0 flex-col">
      <div className="flex h-[29px] shrink-0 items-start bg-[#e0e4ec]">
        <div className="z-10 flex h-[30px] w-[77px] items-center justify-between border-b-3 border-[#3b82c8] bg-white pr-[6px] pl-[11px]">
          Graph
          <Cross />
        </div>
        <TabArrows />
      </div>
      <section className="flex h-[846px] flex-col border border-[#bfbfbf]">
        <div className="flex h-[28px] shrink-0 items-center font-['DejaVu_Sans',sans-serif] text-[9.6px]">
          <div className="h-[28px] w-[27px] bg-white">
            <GephiMark />
          </div>
          <span className="ml-[4px] w-[49px]">Dragging</span>
          <span className="w-[125px] tracking-[0.15px] text-[#1433ff]">(Configure)</span>
          <VSep className="h-[22px]" />
        </div>
        <div className="flex h-[784px] shrink-0">
          <ToolColumn />
          <div className="w-[935px] bg-white">
            <Graph />
          </div>
        </div>
        <GraphFooter />
      </section>
    </main>
  );
}

/* ---------- right column ---------- */

const STATS: [string, string[]][] = [
  ["Network Overview", ["Average Degree", "Avg. Weighted Degree", "Network Diameter", "Graph Density", "HITS", "PageRank", "Connected Components"]],
  ["Community Detection", ["Modularity", "Statistical Inference"]],
  ["Node Overview", ["Avg. Clustering Coefficient", "Eigenvector Centrality"]],
  ["Edge Overview", ["Avg. Path Length"]],
  ["Dynamic", ["# Nodes", "# Edges"]],
];

function RightColumn() {
  return (
    <aside className="flex w-[171px] shrink-0 flex-col">
      <ViewHeader title="Context" width="w-[77px]" />
      <section className="h-[201px] shrink-0 border border-[#bfbfbf] pt-[4px] pl-[7px] leading-6">
        <div><b className="mr-[9px] text-[14.8px]">Nodes:</b>328</div>
        <div><b className="mr-[9px] text-[14.8px]">Edges:</b>577</div>
        <div>Undirected Graph</div>
      </section>
      <div className="mt-[4px] flex h-[29px] shrink-0 items-start">
        <span className="w-[67px] pt-[4px] pl-[14px]">Filters</span>
        <VSep className="mt-1 h-[21px]" />
        <div className="z-10 flex h-[30px] w-[67px] items-center justify-between border-b-3 border-[#9aa7b8] pr-[7px] pl-px">
          Stati…
          <Cross />
        </div>
        <VSep className="mt-1 h-[21px]" />
        <Minimize />
      </div>
      <section className="flex h-[612px] flex-col border border-[#bfbfbf]">
        <div className="h-[27px] shrink-0 border-b border-[#bfbfbf] pl-[5px] leading-[26px]">Settings</div>
        <div className="flex h-[573px] shrink-0">
          <div className="w-[159px] overflow-hidden border-t border-[#d6e0f6] bg-white pt-[9px] whitespace-nowrap">
            {STATS.map(([title, items]) => (
              <div key={title}>
                <div className="flex h-[22px] items-center border-y border-[#ccd9f4] bg-[#f7f7f7] pl-[5px] text-[15.2px] font-bold">
                  <svg width="9" height="9" viewBox="0 0 9 9" className="mr-[5px] shrink-0">
                    <rect x=".5" y=".5" width="8" height="8" fill="#fff" stroke="#666" />
                    <path d="M2 3h5L4.500 6z" fill="#333" />
                  </svg>
                  {title}
                </div>
                {items.map((t) => (
                  <div key={t} className="h-[34px] pl-[4px] leading-[28px]">{t}</div>
                ))}
              </div>
            ))}
          </div>
          <div className="flex-1 bg-[#f5f5f5] pt-[2px] pl-[2px]">
            <div className="h-[490px] w-[6px] rounded-full bg-[#dbdbdb]" />
          </div>
        </div>
        <div className="flex-1 bg-[#f5f5f5] pt-[2px] pl-[2px]">
          <div className="h-[6px] w-[99px] rounded-full bg-[#dbdbdb]" />
        </div>
      </section>
    </aside>
  );
}

export default function App() {
  return (
    <div className="h-[1049px] w-[1475px] overflow-hidden bg-white pt-[7px] pl-[9px]">
      <div className="flex h-[1033px] w-[1457px] flex-col overflow-hidden rounded-t-[8px] border border-[#bfbfbf] bg-[#f1f1f1] font-['Liberation_Sans',Arial,sans-serif] text-[14.5px] leading-[20px] text-[#0c0c0c]">
        <TitleBar />
        <TopBars />
        <div className="flex gap-[4px] px-[4px] pt-[4px]">
          <div className="flex w-[301px] shrink-0 flex-col">
            <Appearance />
            <div className="h-[4px]" />
            <LayoutView />
          </div>
          <GraphView />
          <RightColumn />
        </div>
      </div>
    </div>
  );
}
